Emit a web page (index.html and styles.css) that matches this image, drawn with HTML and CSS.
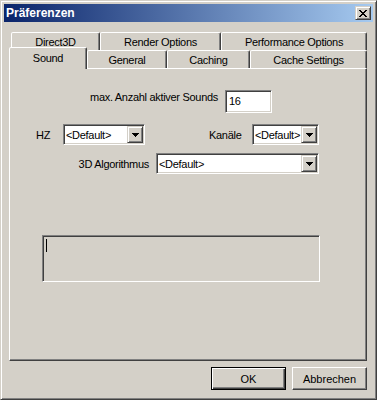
FILE: index.html
```html
<!DOCTYPE html>
<html lang="de">
<head>
  <meta charset="UTF-8" />
  <meta name="viewport" content="width=device-width, initial-scale=1.0"/>
  <title>Präferenzen</title>
  <link rel="stylesheet" href="styles.css">
</head>
<body>
  <div class="window">
    <div class="titlebar">
      <span class="title">Präferenzen</span>
      <button class="close" type="button">
        <svg width="8" height="7" viewBox="0 0 8 7" shape-rendering="crispEdges">
          <path d="M0 0h2v1h1v1h2v-1h1v-1h2v1h-1v1h-1v1h-1v1h1v1h1v1h1v1h-2v-1h-1v-1h-2v1h-1v1h-2v-1h1v-1h1v-1h1v-1h-1v-1h-1v-1h-1z" fill="#000"/>
        </svg>
      </button>
    </div>

    <!-- tab strip: two rows, selected tab in the front row -->
    <div class="tabs">
      <div class="tab-row back">
        <div class="tab w-d3d">Direct3D</div>
        <div class="tab w-render">Render Options</div>
        <div class="tab w-perf">Performance Options</div>
      </div>
      <div class="tab-row front">
        <div class="tab selected w-sound">Sound</div>
        <div class="tab w-general">General</div>
        <div class="tab w-caching">Caching</div>
        <div class="tab w-cache">Cache Settings</div>
      </div>
    </div>

    <div class="page">
      <div class="row row-count">
        <span class="label">max. Anzahl aktiver Sounds</span>
        <div class="sunken input">16</div>
      </div>

      <div class="row row-audio">
        <span class="label hz">HZ</span>
        <div class="sunken select w-hz">
          <span class="value">&lt;Default&gt;</span>
          <span class="arrow">
            <svg width="7" height="4" viewBox="0 0 7 4" shape-rendering="crispEdges"><path d="M0 0h7v1h-1v1h-1v1h-1v1h-1v-1h-1v-1h-1v-1h-1z" fill="#000"/></svg>
          </span>
        </div>
        <span class="label channels">Kanäle</span>
        <div class="sunken select w-ch">
          <span class="value">&lt;Default&gt;</span>
          <span class="arrow">
            <svg width="7" height="4" viewBox="0 0 7 4" shape-rendering="crispEdges"><path d="M0 0h7v1h-1v1h-1v1h-1v1h-1v-1h-1v-1h-1v-1h-1z" fill="#000"/></svg>
          </span>
        </div>
      </div>

      <div class="row row-algo">
        <span class="label algo">3D Algorithmus</span>
        <div class="sunken select w-algo">
          <span class="value">&lt;Default&gt;</span>
          <span class="arrow">
            <svg width="7" height="4" viewBox="0 0 7 4" shape-rendering="crispEdges"><path d="M0 0h7v1h-1v1h-1v1h-1v1h-1v-1h-1v-1h-1v-1h-1z" fill="#000"/></svg>
          </span>
        </div>
      </div>

      <div class="sunken memo"><span class="caret"></span></div>
    </div>

    <div class="actions">
      <button class="btn default" type="button">OK</button>
      <button class="btn" type="button">Abbrechen</button>
    </div>
  </div>
</body>
</html>
```

FILE: styles.css
```css
body {
  margin: 0;
  background: #d4d0c8;
  font-family: "Liberation Sans", Arial, sans-serif;
  font-size: 11px;
  letter-spacing: -0.3px;
  color: #000;
}

.window {
  width: 377px;
  height: 400px;
  box-sizing: border-box;
  border: 1px solid;
  border-color: #d4d0c8 #404040 #404040 #d4d0c8;
  box-shadow: inset 1px 1px #fff, inset -1px -1px #808080;
  padding: 3px;
  background: #d4d0c8;
  display: flex;
  flex-direction: column;
}

/* title bar */
.titlebar {
  height: 18px;
  display: flex;
  align-items: center;
  justify-content: space-between;
  padding: 0 2px;
  background: linear-gradient(to right, #0a246a, #a6caf0);
}

.title {
  color: #fff;
  font-weight: bold;
  font-size: 12px;
  letter-spacing: 0;
}

.close {
  width: 16px;
  height: 14px;
  box-sizing: border-box;
  padding: 0;
  border: 1px solid;
  border-color: #d4d0c8 #404040 #404040 #d4d0c8;
  box-shadow: inset 1px 1px #fff, inset -1px -1px #808080;
  background: #d4d0c8;
  display: flex;
  align-items: center;
  justify-content: center;
}

/* tabs */
.tabs {
  margin-top: 10px;
}

.tab-row {
  display: flex;
  align-items: flex-end;
  height: 18px;
}

.tab-row.back {
  margin-left: 7px;
}

.tab-row.front {
  margin-left: 5px;
}

.tab {
  box-sizing: border-box;
  height: 18px;
  border: 1px solid;
  border-bottom: 0;
  border-color: #fff #404040 transparent #fff;
  border-radius: 2px 2px 0 0;
  box-shadow: inset -1px 0 #808080;
  background: #d4d0c8;
  display: flex;
  align-items: center;
  justify-content: center;
  white-space: nowrap;
}

.tab.selected {
  height: 22px;
  margin-bottom: -1px;
  padding-bottom: 1px;
  position: relative;
  z-index: 1;
}

.w-d3d { width: 89px; }
.w-render { width: 121px; }
.w-perf { width: 146px; }
.w-sound { width: 78px; }
.w-general { width: 80px; }
.w-caching { width: 83px; }
.w-cache { width: 117px; }

/* tab page */
.page {
  margin-left: 5px;
  width: 358px;
  height: 293px;
  box-sizing: border-box;
  border: 1px solid;
  border-color: #fff #404040 #404040 #fff;
  box-shadow: inset -1px -1px #808080;
}

.row {
  display: flex;
  align-items: center;
}

.label {
  white-space: nowrap;
}

.sunken {
  box-sizing: border-box;
  border: 1px solid;
  border-color: #808080 #fff #fff #808080;
  box-shadow: inset 1px 1px #404040, inset -1px -1px #d4d0c8;
}

.row-count {
  margin-top: 21px;
  align-items: flex-start;
}

.row-count .label {
  width: 208px;
  text-align: right;
  line-height: 14px;
}

.input {
  margin-left: 7px;
  width: 47px;
  height: 23px;
  padding: 0 3px;
  line-height: 21px;
  background: #fff;
}

.row-audio {
  margin-top: 11px;
}

.hz {
  margin-left: 26px;
  width: 27px;
}

.channels {
  margin-left: 64px;
  width: 43px;
}

.row-algo {
  margin-top: 8px;
}

.algo {
  width: 139px;
  margin-right: 7px;
  text-align: right;
}

.select {
  height: 21px;
  padding: 1px;
  background: #fff;
  display: flex;
  align-items: center;
}

.select .value {
  flex: 1;
  padding-left: 1px;
  overflow: hidden;
  white-space: nowrap;
}

.arrow {
  width: 16px;
  height: 17px;
  box-sizing: border-box;
  border: 1px solid;
  border-color: #d4d0c8 #404040 #404040 #d4d0c8;
  box-shadow: inset 1px 1px #fff, inset -1px -1px #808080;
  background: #d4d0c8;
  display: flex;
  align-items: center;
  justify-content: center;
  flex-shrink: 0;
}

.w-hz { width: 82px; }
.w-ch { width: 67px; }
.w-algo { width: 163px; }

.memo {
  margin-top: 61px;
  margin-left: 32px;
  width: 278px;
  height: 47px;
  background: #d4d0c8;
}

.caret {
  display: block;
  width: 1px;
  height: 13px;
  margin: 3px;
  background: #000;
}

/* dialog buttons */
.actions {
  display: flex;
  justify-content: flex-end;
  gap: 6px;
  margin-top: 6px;
  padding-right: 6px;
}

.btn {
  width: 75px;
  height: 23px;
  box-sizing: border-box;
  padding: 0;
  font: inherit;
  color: #000;
  border: 1px solid;
  border-color: #fff #404040 #404040 #fff;
  box-shadow: inset -1px -1px #808080;
  background: #d4d0c8;
}

.btn.default {
  border-color: #000;
  box-shadow: inset 1px 1px #fff, inset -1px -1px #404040, inset -2px -2px #808080;
}
```
